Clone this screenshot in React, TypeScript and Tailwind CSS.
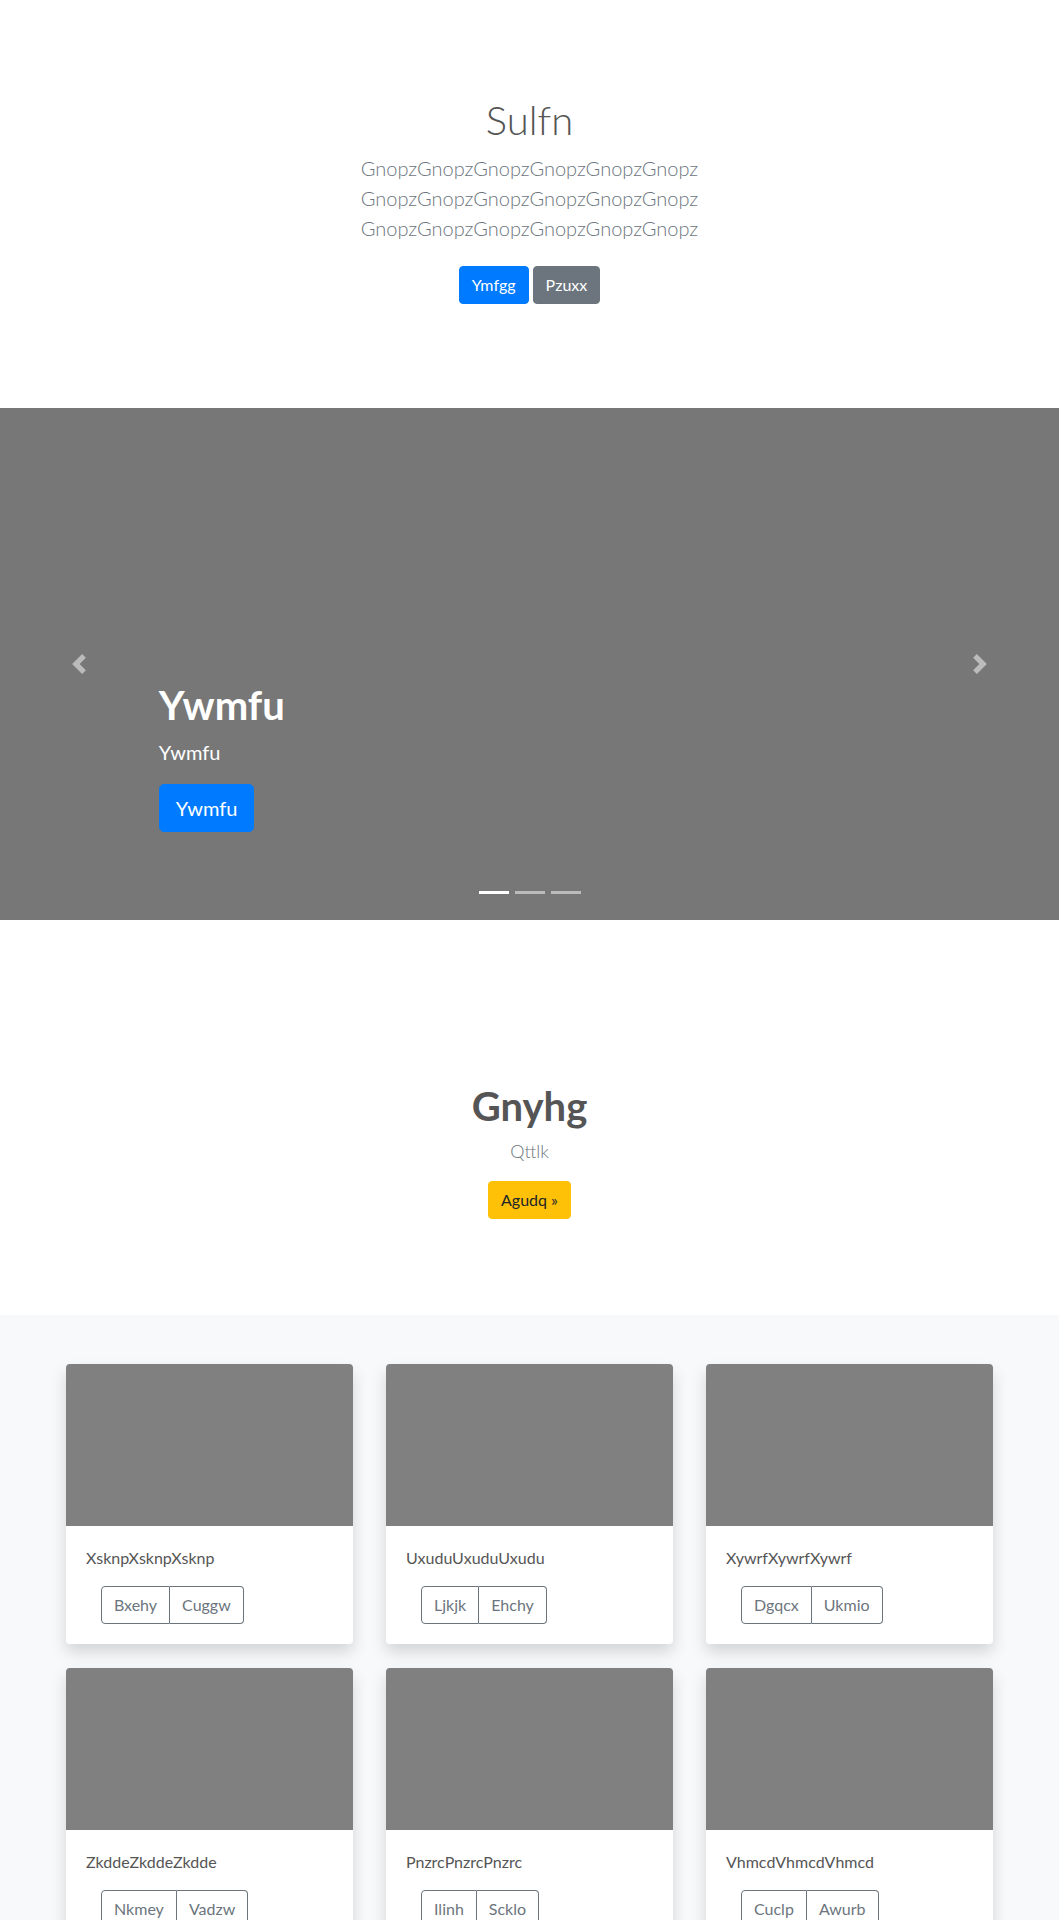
import React from "react";

const cards = [
  { text: "XsknpXsknpXsknp", b1: "Bxehy", b2: "Cuggw" },
  { text: "UxuduUxuduUxudu", b1: "Ljkjk", b2: "Ehchy" },
  { text: "XywrfXywrfXywrf", b1: "Dgqcx", b2: "Ukmio" },
  { text: "ZkddeZkddeZkdde", b1: "Nkmey", b2: "Vadzw" },
  { text: "PnzrcPnzrcPnzrc", b1: "Ilinh", b2: "Scklo" },
  { text: "VhmcdVhmcdVhmcd", b1: "Cuclp", b2: "Awurb" },
];

function Chevron({ dir }: { dir: "prev" | "next" }) {
  return (
    <svg width="20" height="20" viewBox="0 0 8 8" fill="#fff" className="opacity-50">
      {dir === "prev" ? (
        <path d="M5.25 0l-4 4 4 4 1.5-1.5L4.25 4l2.5-2.5L5.25 0z" />
      ) : (
        <path d="M2.75 0l-1.5 1.5L3.75 4l-2.5 2.5L2.75 8l4-4-4-4z" />
      )}
    </svg>
  );
}

export default function App() {
  return (
    <div className="font-[Lato,sans-serif] text-[#555] bg-white min-h-screen">
      {/* Jumbotron */}
      <section className="text-center pt-[96px] pb-[96px]">
        <h1 className="text-[40px] leading-[48px] font-light text-[#555] mb-[9px]">Sulfn</h1>
        <p className="text-[20px] leading-[30px] font-light text-[#6c757d] mb-[15px]">
          <span className="block">GnopzGnopzGnopzGnopzGnopzGnopz</span>
          <span className="block">GnopzGnopzGnopzGnopzGnopzGnopz</span>
          <span className="block">GnopzGnopzGnopzGnopzGnopzGnopz</span>
        </p>
        <div className="flex justify-center gap-1 py-2">
          <a className="inline-block bg-[#007bff] border border-[#007bff] text-white text-[16px] leading-[24px] px-3 py-[6px] rounded">
            Ymfgg
          </a>
          <a className="inline-block bg-[#6c757d] border border-[#6c757d] text-white text-[16px] leading-[24px] px-3 py-[6px] rounded">
            Pzuxx
          </a>
        </div>
      </section>

      {/* Carousel */}
      <section className="relative h-[512px] bg-[#777] flex flex-col justify-end pl-[15%] pb-[88px]">
        <div className="absolute left-0 top-0 bottom-0 w-[15%] flex items-center justify-center">
          <Chevron dir="prev" />
        </div>
        <div className="absolute right-0 top-0 bottom-0 w-[15%] flex items-center justify-center">
          <Chevron dir="next" />
        </div>
        <h1 className="text-[40px] leading-[48px] font-bold text-white">Ywmfu</h1>
        <p className="text-[20px] leading-[30px] text-white mt-2 mb-[17px]">Ywmfu</p>
        <div>
          <a className="inline-block bg-[#007bff] border border-[#007bff] text-white text-[20px] leading-[30px] px-4 py-2 rounded-[5px]">
            Ywmfu
          </a>
        </div>
        <div className="absolute left-0 right-0 bottom-[26px] flex justify-center gap-[6px]">
          <span className="block w-[30px] h-[3px] bg-white" />
          <span className="block w-[30px] h-[3px] bg-white opacity-50" />
          <span className="block w-[30px] h-[3px] bg-white opacity-50" />
        </div>
      </section>

      {/* Call to action */}
      <section className="text-center pt-[162px] pb-[96px]">
        <h1 className="text-[40px] leading-[48px] font-bold text-[#555] mb-2">Gnyhg</h1>
        <p className="text-[18px] leading-[27px] font-light text-[#6c757d] mb-4">Qttlk</p>
        <a className="inline-block bg-[#ffc107] border border-[#ffc107] text-[#212529] text-[16px] leading-[24px] px-3 py-[6px] rounded">
          Agudq »
        </a>
      </section>

      {/* Album */}
      <section className="bg-[#f8f9fa] pt-[49px] pb-[48px]">
        <div className="w-[960px] mx-auto grid grid-cols-3">
          {cards.map((c) => (
            <div key={c.text} className="px-[16.5px] mb-6">
              <div className="bg-white rounded overflow-hidden shadow-[0_8px_16px_rgba(0,0,0,0.15)]">
                <div className="h-[162px] bg-[#808080]" />
                <div className="p-5">
                  <p className="text-[16px] leading-[24px] text-[#555] mb-4">{c.text}</p>
                  <div className="flex ml-[15px]">
                    <a className="inline-block border border-[#6c757d] text-[#6c757d] text-[16px] leading-[24px] px-3 py-[6px] rounded-l">
                      {c.b1}
                    </a>
                    <a className="inline-block border border-l-0 border-[#6c757d] text-[#6c757d] text-[16px] leading-[24px] px-3 py-[6px] rounded-r">
                      {c.b2}
                    </a>
                  </div>
                </div>
              </div>
            </div>
          ))}
        </div>
      </section>
    </div>
  );
}
